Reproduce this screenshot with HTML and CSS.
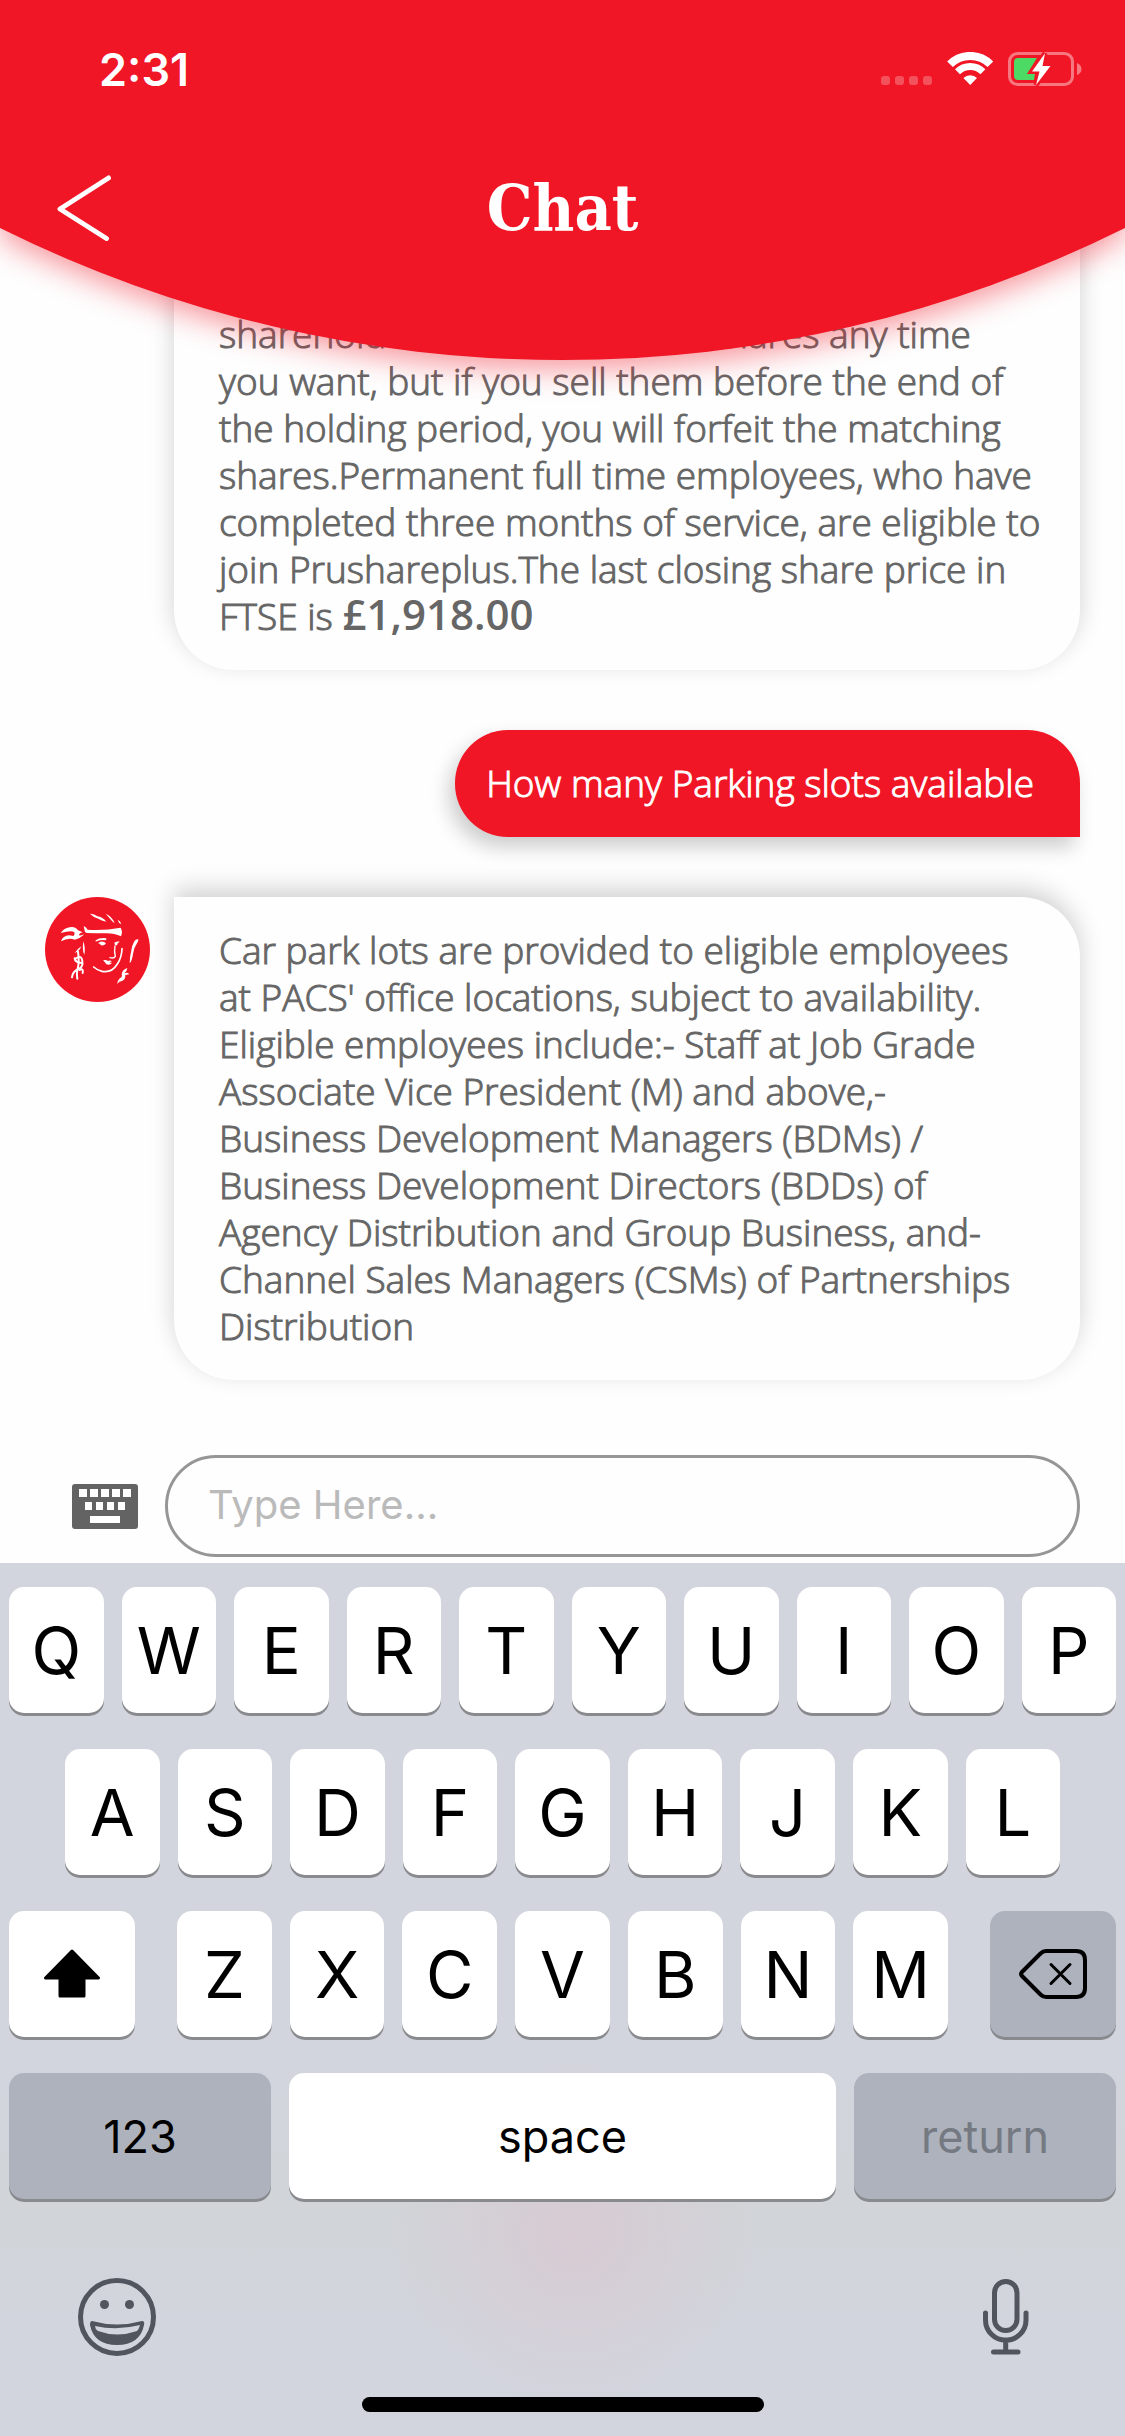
FILE: index.html
```html
<!DOCTYPE html>
<html lang="en">
<head>
<meta charset="utf-8">
<meta name="viewport" content="width=device-width, initial-scale=1">
<title>Chat</title>
<link rel="stylesheet" href="styles.css">
</head>
<body>
<header class="header">
  <svg class="header-curve" viewBox="0 0 1125 360" preserveAspectRatio="none" aria-hidden="true"><path d="M0 0H1125V228A1264 1264 0 0 1 0 228Z" fill="#f01625"/></svg>
  <div class="status-bar">
    <span class="clock">2:31</span>
    <svg class="status-icons" viewBox="0 0 201 34" aria-hidden="true">
      <g fill="#fff" opacity=".25"><rect y="24" width="9" height="9" rx="3"/><rect x="14" y="24" width="9" height="9" rx="3"/><rect x="28" y="24" width="9" height="9" rx="3"/><rect x="42" y="24" width="9" height="9" rx="3"/></g>
      <g fill="none" stroke="#fff"><path stroke-width="8" d="M69 12.3A28.5 28.5 0 0 1 109.4 12.3"/><path stroke-width="7" d="M76.5 19.8A18 18 0 0 1 101.9 19.8"/></g>
      <path fill="#fff" d="M89.2 33L82.4 26A10 10 0 0 1 96 26Z"/>
      <rect x="128.500" y="1.500" width="63" height="31" rx="8" fill="none" stroke="#fff" stroke-width="3" opacity=".42"/>
      <path fill="#fff" opacity=".42" d="M196 11Q200.500 13 200.500 17T196 23Z"/>
      <path fill="#4cd964" d="M137 6H156L146 22H154L153 28H137Q133 28 133 24V10Q133 6 137 6Z"/>
      <path fill="#fff" stroke="#f01625" stroke-width="5" paint-order="stroke" d="M164 1.300L151 19.500H158.500L155 33L169.500 14H161.500Z"/>
    </svg>
  </div>
  <div class="nav">
    <button class="back" type="button" aria-label="Back"><svg viewBox="0 0 54 66" aria-hidden="true"><path d="M51.500 3L3 34L49.500 63.500" fill="none" stroke="#fff" stroke-width="5" stroke-linecap="round" stroke-linejoin="round"/></svg></button>
    <h1 class="title">Chat</h1>
  </div>
</header>

<main class="messages">
  <article class="row">
    <p class="bubble bot bot-continued">shareholder. You can sell the shares any time<br>you want, but if you sell them before the end of the holding period, you will forfeit the matching shares.Permanent full time employees, who have completed three months of service, are eligible to join Prushareplus.The last closing share price in FTSE is <strong>£1,918.00</strong></p>
  </article>
  <article class="row row-user">
    <p class="bubble user">How many Parking slots available</p>
  </article>
  <article class="row">
    <svg class="avatar" viewBox="45 51 315 315" aria-hidden="true">
      <circle cx="202.500" cy="208.500" r="157.500" fill="#f01625"/>
      <g fill="#fff">
        <path d="M180 101Q192 100 202 109Q216 110 229 125Q214 122 205 116Q190 112 180 101Z"/>
        <path d="M227 101Q245 108 254 129Q249 128 244 121Q236 111 227 101Z"/>
        <path d="M263 119Q272 123 274 133Q266 130 263 119Z"/>
        <path d="M161 138Q169 142 173 149Q224 152 272 143Q279 154 273 169Q250 158 221 160Q192 160 170 159L165 156Q163 148 161 138Z"/>
        <path d="M92 159Q100 146 119 142Q134 138 144 151L158 157Q147 160 147 166Q155 167 163 163Q148 177 134 179Q116 171 93 184Q98 167 118 166L130 168Q136 163 133 157Q126 151 109 155Z"/>
        <path d="M325 178Q326 184 321 190Q311 204 309 222Q306 244 299 250Q299 232 303 216Q305 197 313 184Q318 176 325 178Z"/>
        <path d="M197 181Q210 172 229 175Q231 180 226 181Q212 177 197 185Z"/>
        <path d="M204 190Q213 181 224 187L228 191Q221 198 213 196Q210 190 204 190Z"/>
        <path d="M253 188Q260 183 270 185Q260 190 262 195Q256 198 254 193Z"/>
        <path d="M219 241Q229 239 234 243Q240 240 246 244L238 247L246 249Q239 257 229 253L226 248Z"/>
        <path d="M292 264Q291 274 283 280Q294 275 298 283L286 285Q287 298 276 303Q267 303 262 312Q263 300 270 294Q278 291 275 282Q277 269 292 264Z"/>
        <path d="M160 184Q167 203 163 225Q156 212 160 184Z"/><path d="M154 199Q148 215 134 219Q143 206 154 199Z"/>
      </g>
      <g fill="none" stroke="#fff" stroke-width="6" stroke-linecap="round">
        <path d="M144 215Q149 248 142 270Q139 283 142 296"/><path d="M137 236Q155 223 157 244Q160 260 146 267Q128 273 126 292"/><path d="M134 235Q135 247 155 249"/><path d="M149 270Q161 263 158 279"/>
        <path d="M276 206Q275 233 262 252Q245 280 216 274Q202 271 191 261" stroke-width="5"/>
        <path d="M255 198Q252 215 256 229Q252 236 240 233" stroke-width="4"/>
      </g>
    </svg>
    <p class="bubble bot">Car park lots are provided to eligible employees at PACS' office locations, subject to availability. Eligible employees include:- Staff at Job Grade Associate Vice President (M) and above,-<br>Business Development Managers (BDMs) /<br>Business Development Directors (BDDs) of<br>Agency Distribution and Group Business, and-<br>Channel Sales Managers (CSMs) of Partnerships Distribution</p>
  </article>
</main>

<form class="composer">
  <svg class="keyboard-icon" viewBox="0 0 66 45" aria-hidden="true"><rect width="66" height="45" rx="3" fill="#636363"/><path fill="#fff" d="M7 5h8v8H7zM18 5h8v8h-8zM29 5h8v8h-8zM40 5h8v8h-8zM51 5h8v8h-8zM13 18h7v8h-7zM24 18h7v8h-7zM35 18h7v8h-7zM46 18h7v8h-7zM18 32h30v7H18z"/></svg>
  <input class="message-input" type="text" placeholder="Type Here..." aria-label="Message">
</form>

<section class="keyboard" aria-label="Keyboard">
  <div class="keys">
    <button class="key" type="button">Q</button><button class="key" type="button">W</button><button class="key" type="button">E</button><button class="key" type="button">R</button><button class="key" type="button">T</button><button class="key" type="button">Y</button><button class="key" type="button">U</button><button class="key" type="button">I</button><button class="key" type="button">O</button><button class="key" type="button">P</button>
  </div>
  <div class="keys keys-home">
    <button class="key" type="button">A</button><button class="key" type="button">S</button><button class="key" type="button">D</button><button class="key" type="button">F</button><button class="key" type="button">G</button><button class="key" type="button">H</button><button class="key" type="button">J</button><button class="key" type="button">K</button><button class="key" type="button">L</button>
  </div>
  <div class="keys keys-split">
    <button class="key key-side" type="button" aria-label="Shift"><svg width="58" height="50" viewBox="0 0 58 50" aria-hidden="true"><path d="M29 2L55.500 29H41V47H17V29H2.500Z" stroke="#000" stroke-width="3" stroke-linejoin="round"/></svg></button>
    <div class="keys keys-middle">
      <button class="key" type="button">Z</button><button class="key" type="button">X</button><button class="key" type="button">C</button><button class="key" type="button">V</button><button class="key" type="button">B</button><button class="key" type="button">N</button><button class="key" type="button">M</button>
    </div>
    <button class="key key-side key-gray" type="button" aria-label="Delete"><svg width="68" height="50" viewBox="0 0 68 50" aria-hidden="true"><g fill="none" stroke="#000" stroke-width="4" stroke-linecap="round" stroke-linejoin="round"><path d="M27 2H57Q66 2 66 11V39Q66 48 57 48H27Q24 48 21.500 45.500L3 27Q1 25 3 23L21.500 4.500Q24 2 27 2Z"/><path stroke-width="3" d="M32 15.500L51 34.500M51 15.500L32 34.500"/></g></svg></button>
  </div>
  <div class="keys">
    <button class="key key-wide key-gray" type="button">123</button>
    <button class="key key-space" type="button">space</button>
    <button class="key key-wide key-gray key-dim" type="button">return</button>
  </div>
  <div class="tools">
    <button class="tool" type="button" aria-label="Emoji"><svg width="78" height="78" viewBox="0 0 78 78" aria-hidden="true"><circle cx="39" cy="39" r="36.500" fill="none" stroke="#50555e" stroke-width="5"/><g fill="#50555e"><circle cx="26.500" cy="26.500" r="4.500"/><circle cx="51.500" cy="26.500" r="4.500"/><path fill-rule="evenodd" d="M14 43Q39 50 64 43Q67 43 66 47Q62 67 39 67Q16 67 12 47Q12 43 14 43ZM17 48Q17 51 20 53Q39 60 59 53Q61 51 62 47Q39 53 17 48Z"/></g></svg></button>
    <button class="tool" type="button" aria-label="Dictation"><svg width="46" height="76" viewBox="0 0 46 76" aria-hidden="true"><g fill="none" stroke="#50555e" stroke-width="5" stroke-linecap="round"><rect x="11.500" y="2.500" width="22.500" height="49" rx="11.200"/><path d="M2.500 34V41A20.200 20.200 0 0 0 43 41V34M22.700 61V73M10.500 73H35"/></g></svg></button>
  </div>
  <div class="home-indicator"></div>
</section>
</body>
</html>
```
FILE: styles.css
```css
* {
  box-sizing: border-box;
}

body {
  margin: 0;
  min-height: 100vh;
  display: flex;
  flex-direction: column;
  background: #fefefe;
  font-family: Inter, sans-serif;
}

button {
  border: 0;
  padding: 0;
  background: none;
  font: inherit;
  color: inherit;
}

svg {
  display: block;
  flex: none;
}

.header {
  position: relative;
  z-index: 1;
  height: 228px;
  color: #fff;
}

.header-curve {
  position: absolute;
  top: 0;
  left: 0;
  width: 100%;
  height: 360px;
  z-index: -1;
  overflow: visible;
  filter: drop-shadow(0 9px 15px rgba(240, 22, 37, 0.45));
}

.status-bar {
  display: flex;
  align-items: center;
  justify-content: space-between;
  height: 138px;
  padding: 0 43px 0 99px;
}

.clock {
  font-size: 45px;
  font-weight: 600;
}

.status-icons {
  width: 201px;
  height: 34px;
}

.nav {
  display: grid;
  grid-template-columns: 1fr auto 1fr;
  align-items: center;
  height: 140px;
  padding: 0 57px;
}

.back {
  width: 54px;
  height: 66px;
}

.title {
  margin: 0;
  font: bold 64px/72px "DejaVu Serif Condensed", "DejaVu Serif", serif;
}

.messages {
  flex: 1 0 0;
  display: flex;
  flex-direction: column;
  justify-content: flex-end;
  gap: 60px;
  padding: 0 45px 75px;
  overflow: hidden;
}

.row {
  display: flex;
  align-items: flex-start;
  gap: 24px;
}

.row-user {
  justify-content: flex-end;
}

.avatar {
  width: 105px;
  height: 105px;
}

.bubble {
  margin: 0;
  padding-top: 29px;
  padding-bottom: 31px;
  font: 300 37px/47px "Open Sans", sans-serif;
  -webkit-text-stroke: 1px;
}

.bubble strong {
  font-size: 42px;
  line-height: 36px;
  font-weight: 600;
  -webkit-text-stroke: 0;
}

.bot {
  flex: 1;
  padding-left: 45px;
  padding-right: 37px;
  border-radius: 0 60px 60px 60px;
  background: #fefefe;
  color: #666;
  box-shadow: 0 -8px 24px rgba(0, 0, 0, 0.18);
}

.bot:first-child {
  margin-left: 129px;
}

.bot-continued {
  padding-top: 160px;
}

.user {
  padding-left: 31px;
  padding-right: 46px;
  border-radius: 53px 53px 0 53px;
  background: #f01625;
  color: #fff;
  box-shadow: -6px 10px 20px rgba(0, 0, 0, 0.2);
}

.composer {
  display: flex;
  align-items: center;
  gap: 27px;
  padding: 0 45px 6px 72px;
}

.keyboard-icon {
  width: 66px;
  height: 45px;
}

.message-input {
  flex: 1;
  min-width: 0;
  height: 102px;
  padding: 0 40px 4px;
  border: 3px solid #969696;
  border-radius: 51px;
  background: #fefefe;
  color: #636363;
  font: 40px Inter, sans-serif;
}

.message-input::placeholder {
  color: #bababa;
}

.keyboard {
  display: flex;
  flex-direction: column;
  gap: 36px;
  padding: 24px 9px;
  background:
    radial-gradient(circle 180px at 51% 670px, rgba(217, 200, 210, 0.8), rgba(217, 205, 212, 0)),
    linear-gradient(#d2d5dd 0, #d2d5dd 500px, #d1d4d8 640px, #d2d5dd 780px);
}

.keys {
  display: flex;
  gap: 18px;
}

.keys-home {
  padding: 0 56px;
}

.keys-split {
  gap: 42px;
}

.keys-middle {
  flex: 1;
}

.key {
  flex: 1;
  min-width: 0;
  height: 126px;
  display: flex;
  align-items: center;
  justify-content: center;
  border-radius: 15px;
  background: #fff;
  box-shadow: 0 3px 0 #898a8d;
  color: #000;
  font-size: 65px;
}

.key-side {
  flex: 0 0 126px;
}

.key-gray {
  background: #adb2bd;
}

.key-wide {
  flex: 0 0 262px;
  font-size: 45px;
}

.key-space {
  font-size: 45px;
}

.key-dim {
  color: #747982;
}

.tools {
  display: flex;
  align-items: center;
  justify-content: space-between;
  padding: 43px 87px 5px 69px;
}

.home-indicator {
  width: 402px;
  height: 15px;
  align-self: center;
  border-radius: 8px;
  background: #000;
}
```
